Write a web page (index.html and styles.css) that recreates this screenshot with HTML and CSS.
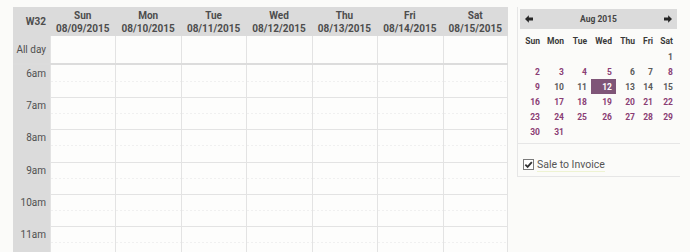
FILE: index.html
```html
<!DOCTYPE html>
<html>
<head>
<meta charset="utf-8">
<link rel="stylesheet" href="styles.css">
</head>
<body>
<div class="page">
  <div class="cal">
    <div class="head">
      <div class="wk">W32</div>
      <div class="dh">Sun<br>08/09/2015</div>
      <div class="dh">Mon<br>08/10/2015</div>
      <div class="dh">Tue<br>08/11/2015</div>
      <div class="dh">Wed<br>08/12/2015</div>
      <div class="dh">Thu<br>08/13/2015</div>
      <div class="dh">Fri<br>08/14/2015</div>
      <div class="dh">Sat<br>08/15/2015</div>
    </div>
    <div class="allday">
      <div class="lbl">All day</div>
      <div class="c"></div><div class="c"></div><div class="c"></div><div class="c"></div><div class="c"></div><div class="c"></div><div class="c last"></div>
    </div>
    <div class="sep"></div>
    <div class="hr first">
      <div class="lbl">6am</div>
      <div class="c"></div><div class="c"></div><div class="c"></div><div class="c"></div><div class="c"></div><div class="c"></div><div class="c last"></div>
    </div>
    <div class="hr">
      <div class="lbl">7am</div>
      <div class="c"></div><div class="c"></div><div class="c"></div><div class="c"></div><div class="c"></div><div class="c"></div><div class="c last"></div>
    </div>
    <div class="hr">
      <div class="lbl">8am</div>
      <div class="c"></div><div class="c"></div><div class="c"></div><div class="c"></div><div class="c"></div><div class="c"></div><div class="c last"></div>
    </div>
    <div class="hr">
      <div class="lbl">9am</div>
      <div class="c"></div><div class="c"></div><div class="c"></div><div class="c"></div><div class="c"></div><div class="c"></div><div class="c last"></div>
    </div>
    <div class="hr">
      <div class="lbl">10am</div>
      <div class="c"></div><div class="c"></div><div class="c"></div><div class="c"></div><div class="c"></div><div class="c"></div><div class="c last"></div>
    </div>
    <div class="hr">
      <div class="lbl">11am</div>
      <div class="c"></div><div class="c"></div><div class="c"></div><div class="c"></div><div class="c"></div><div class="c"></div><div class="c last"></div>
    </div>
  </div>

  <aside class="side">
    <div class="mini">
      <div class="mhead">
        <svg class="arr" viewBox="0 0 10 10"><path d="M0 5 L4.8 0.2 L4.8 3.2 L10 3.2 L10 6.8 L4.8 6.8 L4.8 9.8 Z"/></svg>
        <span class="mtitle">Aug 2015</span>
        <svg class="arr" viewBox="0 0 10 10"><path d="M10 5 L5.2 0.2 L5.2 3.2 L0 3.2 L0 6.8 L5.2 6.8 L5.2 9.8 Z"/></svg>
      </div>
      <table class="mtab">
        <colgroup><col class="w24"><col class="w24"><col class="w23"><col class="w25"><col class="w23"><col class="w18"><col class="w20"></colgroup>
        <thead>
          <tr><th>Sun</th><th>Mon</th><th>Tue</th><th>Wed</th><th>Thu</th><th>Fri</th><th>Sat</th></tr>
        </thead>
        <tbody>
          <tr><td></td><td></td><td></td><td></td><td></td><td></td><td class="g">1</td></tr>
          <tr><td>2</td><td>3</td><td>4</td><td>5</td><td class="g">6</td><td class="g">7</td><td>8</td></tr>
          <tr><td>9</td><td class="g">10</td><td class="g">11</td><td class="sel">12</td><td class="g">13</td><td class="g">14</td><td class="g">15</td></tr>
          <tr><td>16</td><td>17</td><td>18</td><td>19</td><td>20</td><td>21</td><td>22</td></tr>
          <tr><td>23</td><td>24</td><td>25</td><td>26</td><td>27</td><td>28</td><td>29</td></tr>
          <tr><td>30</td><td>31</td><td></td><td></td><td></td><td></td><td></td></tr>
        </tbody>
      </table>
    </div>
    <label class="filter">
      <span class="cb"><svg viewBox="0 0 10 10"><path d="M1.5 5.2 L4 7.7 L8.7 2.3" /></svg></span>
      <span class="ft">Sale to Invoice</span>
    </label>
  </aside>
</div>
</body>
</html>
```

FILE: styles.css
```css
html, body {
  margin: 0;
  padding: 0;
}
body {
  background: #fbfbf9;
  font-family: Roboto, "Liberation Sans", sans-serif;
  overflow: hidden;
  height: 252px;
}
.page {
  display: flex;
  align-items: flex-start;
  padding: 7px 0 0 13px;
}

/* main week calendar */
.cal {
  width: 495px;
  flex: none;
}
.head, .allday, .hr {
  display: grid;
  grid-template-columns: 37px repeat(7, 1fr);
}
.head {
  background: #dbdbdb;
  height: 29px;
  color: #4d4d4d;
  font-weight: 700;
  font-size: 10px;
  line-height: 13px;
}
.wk {
  display: flex;
  align-items: center;
  justify-content: flex-end;
  padding-right: 4px;
}
.dh {
  text-align: center;
  padding-top: 2px;
}
.lbl {
  background: #dbdbdb;
  color: #505050;
  font-size: 10px;
  text-align: right;
  padding-right: 4px;
}
.allday {
  height: 27px;
}
.allday .lbl {
  line-height: 27px;
}
.c {
  border-left: 1px solid #e3e3e3;
  background: #fdfdfc;
}
.c.last {
  border-right: 1px solid #e3e3e3;
}
.sep {
  height: 2px;
  background: #dcdcdc;
}
.hr {
  height: 32.2px;
}
.hr .lbl {
  padding-top: 3px;
  line-height: 12px;
}
.hr .c {
  border-top: 1px solid #e3e3e3;
  background-color: #fdfdfc;
  background-image: repeating-linear-gradient(90deg, #f0f0f0 0 2px, transparent 2px 4px);
  background-size: 100% 1px;
  background-position: 0 50%;
  background-repeat: no-repeat;
}
.hr.first .c {
  border-top: none;
}

/* sidebar */
.side {
  margin-left: 9px;
  width: 163px;
  flex: none;
  box-sizing: border-box;
  border-left: 1px solid #e6e6e6;
  border-bottom: 1px solid #e6e6e6;
}
.mini {
  padding: 2px 3px 4px 2px;
  border-bottom: 1px solid #e6e6e6;
}
.mhead {
  height: 20px;
  background: #dbdbdb;
  display: flex;
  align-items: center;
  justify-content: space-between;
  padding: 0 5px;
}
.arr {
  width: 8px;
  height: 8px;
  fill: #262626;
}
.mtitle {
  font-size: 8.5px;
  font-weight: 700;
  color: #444;
}
.mtab {
  margin-top: 4px;
  width: 157px;
  table-layout: fixed;
  border-collapse: collapse;
  font-size: 8.5px;
  font-weight: 700;
}
.w24 { width: 24px; }
.w23 { width: 23px; }
.w25 { width: 25px; }
.w18 { width: 18px; }
.w20 { width: 20px; }
.mtab th {
  height: 16px;
  padding: 0 4px 0 0;
  text-align: right;
  color: #3a3a3a;
  font-weight: 700;
}
.mtab td {
  height: 15px;
  padding: 0 4px 0 0;
  text-align: right;
  color: #8a3d74;
}
.mtab td.g {
  color: #5a5a5a;
}
.mtab td.sel {
  background: #7f5578;
  color: #fff;
}

.filter {
  display: flex;
  align-items: center;
  gap: 3px;
  padding: 14px 0 5px 5px;
  height: 13px;
}
.cb {
  width: 11px;
  height: 11px;
  box-sizing: border-box;
  border: 1px solid #7a7a7a;
  background: #fff;
  display: flex;
}
.cb svg {
  width: 9px;
  height: 9px;
  fill: none;
  stroke: #333;
  stroke-width: 2;
}
.ft {
  font-size: 10.5px;
  color: #555;
  line-height: 13px;
  border-bottom: 1px solid #eef3d2;
}
```
